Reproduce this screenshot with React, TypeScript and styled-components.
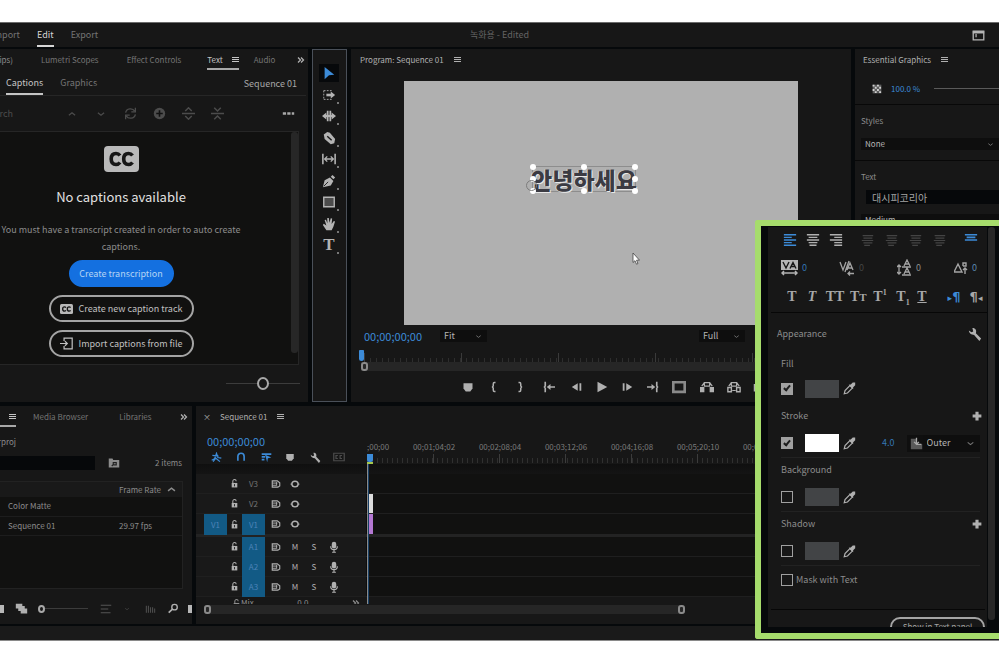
import React from "react";
import styled, { createGlobalStyle, css } from "styled-components";

const C = {
  gap: "#06090b",
  panel: "#171717",
  well: "#111110",
  line: "#262626",
  text: "#8c8c8c",
  dim: "#747474",
  off: "#4c4c4c",
  bright: "#d6d6d6",
  blue: "#3c8bd8",
  patch: "#125a85",
  green: "#a6dc6c",
};

const Global = createGlobalStyle`
  *, *::before, *::after { box-sizing: border-box; }
  body {
    margin: 0;
    background: #fff;
    color: ${C.text};
    font: 8px/12px "Noto Sans CJK KR", "Open Sans", sans-serif;
  }
  button, input, select { font: inherit; color: inherit; }
  button { background: none; border: 0; padding: 0; display: inline-flex; align-items: center; justify-content: center; white-space: nowrap; }
  h2, h3, p { margin: 0; font-weight: 400; font-size: inherit; }
  svg { display: block; flex: none; }
`;

/* ---------- shell ---------- */

const Page = styled.main`
  padding: 22px 1px 0 0;
`;

const Shell = styled.div`
  position: relative;
  background: ${C.gap};
  border-top: 1px solid #6b6b6b;
  border-bottom: 1px solid #8a8a8a;
  overflow: hidden;
`;

const TitleBar = styled.header`
  display: grid;
  grid-template-columns: 1fr auto 1fr;
  align-items: center;
  height: 24px;
  margin-bottom: 2px;
  background: ${C.panel};
`;

const ModeTabs = styled.nav`
  display: flex;
  align-items: stretch;
  height: 24px;
  gap: 17px;
`;

const ClipStart = styled.span<{ $w: number }>`
  display: flex;
  flex: none;
  justify-content: flex-end;
  align-items: center;
  width: ${(p) => p.$w}px;
  overflow: hidden;
  white-space: nowrap;
`;

const ModeTab = styled.button<{ $on?: boolean }>`
  color: ${(p) => (p.$on ? C.bright : C.dim)};
  border-bottom: 2px solid ${(p) => (p.$on ? C.bright : "transparent")};
  border-top: 2px solid transparent;
  font-size: 9px;
`;

const DocTitle = styled.span`
  color: #646464;
  font-size: 9px;
`;

const TitleEnd = styled.div`
  display: flex;
  justify-content: flex-end;
  padding-right: 14px;
  color: #b5b5b5;
`;

const Upper = styled.div`
  display: grid;
  grid-template-columns: 308px 35px 1fr 144px;
  column-gap: 4px;
  height: 353px;
`;

const Lower = styled.div`
  display: grid;
  grid-template-columns: 192px 1fr;
  column-gap: 4px;
  height: 218px;
  margin-top: 4px;
`;

const StatusBar = styled.footer`
  height: 14px;
  margin-top: 2px;
  background: #1a1a1a;
`;

const Panel = styled.section`
  background: ${C.panel};
  min-width: 0;
  overflow: hidden;
  display: flex;
  flex-direction: column;
`;

/* ---------- shared bits ---------- */

const TabRow = styled.div<{ $pad?: number }>`
  display: flex;
  align-items: stretch;
  height: 21px;
  flex: none;
  padding-left: ${(p) => p.$pad ?? 0}px;
  white-space: nowrap;
`;

const Tab = styled.button<{ $on?: boolean; $ml?: number }>`
  gap: 8px;
  margin-left: ${(p) => p.$ml ?? 0}px;
  color: ${(p) => (p.$on ? "#c4c4c4" : C.dim)};
  border-top: 2px solid transparent;
  border-bottom: 2px solid transparent;
  ${(p) => p.$on && css`border-bottom-color: #a8a8a8;`}
`;

const TabTitle = styled.h2`
  display: flex;
  align-items: center;
  gap: 9px;
  color: #b0b0b0;
`;

const Push = styled.span`
  flex: 1;
`;

const Select = styled.label<{ $w?: string; $h?: number }>`
  display: flex;
  flex: none;
  align-items: center;
  position: relative;
  width: ${(p) => p.$w ?? "100%"};
  height: ${(p) => p.$h ?? 12}px;
  background: #0e0e0e;
  select {
    appearance: none;
    width: 100%;
    height: 100%;
    border: 0;
    padding: 0 4px;
    background: transparent;
    color: #b4b4b4;
  }
  svg {
    position: absolute;
    right: 5px;
    color: #777;
    pointer-events: none;
  }
`;

const Range = styled.input<{ $w: string; $thumb: number }>`
  appearance: none;
  width: ${(p) => p.$w};
  height: 14px;
  margin: 0;
  background: linear-gradient(#3c3c3c, #3c3c3c) center / 100% 1px no-repeat;
  &::-webkit-slider-thumb {
    appearance: none;
    width: ${(p) => p.$thumb}px;
    height: ${(p) => p.$thumb + 1}px;
    border: 2px solid #a8a8a8;
    border-radius: 50%;
    background: ${C.panel};
  }
`;

const IconButton = styled.button<{ $w?: number; $c?: string }>`
  width: ${(p) => p.$w ?? 16}px;
  color: ${(p) => p.$c ?? "#b0b0b0"};
`;

/* ---------- icons ---------- */

const GLYPHS: Record<string, React.ReactNode> = {
  menu: <path d="M1 3h14M1 7h14M1 11h14" strokeWidth="2" shapeRendering="crispEdges" />,
  more: <path d="M1 8h4M6.500 8h4M12 8h3" strokeWidth="3" />,
  chevrons: <path d="M2 3l5 5-5 5M8 3l5 5-5 5" strokeWidth="2.500" />,
  up: <path d="M3 10l5-4 5 4" strokeWidth="2" />,
  down: <path d="M3 6l5 4 5-4" strokeWidth="2" />,
  refresh: <path d="M2 7c1-6 9-6 11-2M14 1v5H9M14 9c-1 6-9 6-11 2M2 15v-5h5" strokeWidth="1.6" />,
  plusCircle: (<><circle cx="8" cy="8" r="7" fill="currentColor" stroke="none" /><path d="M8 4v8M4 8h8" stroke="#111" strokeWidth="2" /></>),
  split: <path d="M0 8h16M4 5l4-4 4 4M4 11l4 4 4-4" strokeWidth="1.8" />,
  merge: <path d="M0 8h16M4 1l4 4 4-4M4 15l4-4 4 4" strokeWidth="1.8" />,
  importFile: <path d="M5 5V1.500h10v13H5V11M0 8h9M6 5l3 3-3 3" strokeWidth="1.5" />,
  workspace: (<><path d="M1.500 2.500h13v11h-13z" strokeWidth="1.6" /><path d="M1 4h14" strokeWidth="3" /><path d="M5 6v4" strokeWidth="1.500" /></>),
  arrow: <path d="M3 1l11 9-6 .5L3 15z" fill="currentColor" stroke="none" />,
  trackSelect: (<><path d="M2 3h9M2 13h9M2 3v10" strokeDasharray="2 1.500" /><path d="M5 8h7" strokeWidth="3" /><path d="M10 4l5 4-5 4z" fill="currentColor" stroke="none" /></>),
  ripple: (<><path d="M6.500 2v12M9.500 2v12" strokeWidth="2" /><path d="M0 8l5-4v8zM16 8l-5-4v8z" fill="currentColor" stroke="none" /><path d="M3 8h10" strokeWidth="2.500" /></>),
  razor: (<><path d="M2 4l4-3 3 1 6 7-1 5-4 1-7-6z" fill="currentColor" stroke="none" /><path d="M6 6l5 4.500" stroke="#171717" strokeWidth="1.600" /></>),
  slip: (<><path d="M1 2v12M15 2v12" strokeWidth="1.800" /><path d="M3 8h10M6 5L3 8l3 3M10 5l3 3-3 3" strokeWidth="1.500" /></>),
  pen: (<><path d="M1 15l2-8 6-3 4 4-3 5z" fill="currentColor" stroke="none" /><path d="M10 3l2-2 3 3-2 2z" fill="currentColor" stroke="none" /><path d="M2 14l5-5" stroke="#171717" /></>),
  rect: <path d="M2 2.500h12v11H2z" fill="#4c4c4c" strokeWidth="1.600" />,
  hand: <path d="M5 15L1 9l1-1.200 3 2L3 3.500l1.500-.5 1.700 4L6 1h1.800L8.500 6.500 10 1.500l1.600.3L11 8l2.500-3.500 1.400.6L13 11l-2 4z" fill="currentColor" stroke="none" />,
  marker: <path d="M2 3h12v7l-3 4H5l-3-4z" fill="currentColor" stroke="none" />,
  braceL: <path d="M10 2H8.500Q7 2 7 4v2.500L6 8l1 1.500V12q0 2 1.500 2H10" strokeWidth="2" />,
  braceR: <path d="M6 2h1.500Q9 2 9 4v2.500L10 8 9 9.500V12q0 2-1.500 2H6" strokeWidth="2" />,
  goIn: (<><path d="M4 2H3v4.500L2 8l1 1.500V14h1M16 8H8" strokeWidth="2.200" /><path d="M5 8l5-4v8z" fill="currentColor" stroke="none" /></>),
  goOut: (<><path d="M12 2h1v4.500L14 8l-1 1.500V14h-1M0 8h8" strokeWidth="2.200" /><path d="M11 8L6 4v8z" fill="currentColor" stroke="none" /></>),
  stepBack: (<><path d="M1 8l8-5v10z" fill="currentColor" stroke="none" /><path d="M12.500 3v10" strokeWidth="2.400" /></>),
  stepFwd: (<><path d="M15 8L7 3v10z" fill="currentColor" stroke="none" /><path d="M3.500 3v10" strokeWidth="2.400" /></>),
  play: <path d="M2 1l13 7-13 7z" fill="currentColor" stroke="none" />,
  frame: <path d="M1.500 2.500h13v11h-13z" strokeWidth="3" stroke="#8a8a8a" />,
  lift: (<><path d="M0 8h5v6H0zM11 8h5v6h-5z" fill="currentColor" stroke="none" /><path d="M5 3h6v4H5zM2 7l3-4M14 7l-3-4" strokeWidth="1.400" /></>),
  extract: (<><path d="M1 8.500h4v5H1zM11 8.500h4v5h-4z" strokeWidth="1.600" /><path d="M5 3h6v4H5zM6 12h4M2 7l3-4M14 7l-3-4" strokeWidth="1.400" /></>),
  camera: (<><path d="M1 4h14v10H1zM5 2h6v3H5z" fill="currentColor" stroke="none" /><circle cx="8" cy="9" r="3" stroke="#171717" /></>),
  wrench: <path d="M1 4l3 2 2-1-1-4c4 0 5 3 4 6l6 6-2 3-6-7C4 9 1 7 1 4z" fill="currentColor" stroke="none" />,
  magnet: <path d="M3 14V7a5 5 0 0 1 10 0v7" strokeWidth="2.600" />,
  nest: <path d="M1 12l4-2 3-8 2 6 5 1M3 14l4-5 6 5M2 5l9 1" strokeWidth="1.800" />,
  linked: (<><path d="M1 3h14M1 7h5M1 11h4" strokeWidth="2.400" /><path d="M6 4l9 4-5 1-1 6z" fill="currentColor" stroke="none" /></>),
  ccDim: <path d="M1 3h14v10H1zM6.500 6H4v4h2.500M12 6H9.500v4H12" strokeWidth="1.600" />,
  lock: (<><path d="M3 7h10v8H3z" fill="currentColor" stroke="none" /><path d="M5 7V4a3 3 0 0 1 6 0" strokeWidth="1.800" /><path d="M8 9v4" stroke="#171717" strokeWidth="1.500" /></>),
  sync: (<><path d="M2 3h8l4 3v5l-3 2H2z" strokeWidth="1.800" /><path d="M2 6.500h8M2 10h6M9 5v6" strokeWidth="1.500" /></>),
  eye: (<><ellipse cx="8" cy="8" rx="5" ry="4.500" strokeWidth="2.200" /><path d="M1 8h2M13 8h2" strokeWidth="2" /></>),
  mic: (<><rect x="5" y="1" width="6" height="9" rx="3" fill="currentColor" stroke="none" /><path d="M3.500 7c0 6 9 6 9 0M8 11v4M5.500 15h5" strokeWidth="1.500" /></>),
  plus: <path d="M8 1v14M1 8h14" strokeWidth="5" />,
  search: (<><circle cx="9.500" cy="6" r="4" strokeWidth="2" /><path d="M6.500 9L1 14" strokeWidth="2.500" /></>),
  binSearch: (<><path d="M1 2h5l1 2h8v10H1z" fill="currentColor" stroke="none" /><path d="M5 12l2.500-2.500M7 7.500h4v3H7z" stroke="#222" strokeWidth="1.500" /></>),
  stack: <path d="M1 2h8v3h3v3h3v6H7v-3H4V8H1z" fill="currentColor" stroke="none" />,
  sort: <path d="M1 3h14M1 8h10M1 13h13" strokeWidth="1.600" />,
  bars: <path d="M2 4v10M5 4v10M8 6v8M11 6v8M14 8v6" strokeWidth="1.600" />,
  checker: (<><path d="M1 1h14v14H1z" fill="#5c5c5c" stroke="none" /><path d="M1 1h3v3H1zM8 1h3v3H8zM4.500 4.500h3v3h-3zM11.500 4.500h3v3h-3zM1 8h3v3H1zM8 8h3v3H8zM4.500 11.500h3v3h-3zM11.500 11.500h3v3h-3z" fill="#d0d0d0" stroke="none" /></>),
  dropper: (<><path d="M1.500 14.500l1-4 6-6 3 3-6 6z" strokeWidth="1.500" /><path d="M7 3.500l2.500-.5L12 .5h3V4l-2.500 2.500V9z" fill="currentColor" stroke="none" /></>),
  alignL: <path d="M1 2h14M1 5h9M1 8h14M1 11h9M1 14h14" strokeWidth="1.500" />,
  alignC: <path d="M1 2h14M3 5h10M1 8h14M3 11h10M4 14h8" strokeWidth="1.500" />,
  alignR: <path d="M1 2h14M6 5h9M1 8h14M6 11h9M6 14h9" strokeWidth="1.500" />,
  justify: <path d="M2 2h13M3 5h11M1 8h14M3 11h11M4 14h7" strokeWidth="1.500" />,
  alignTop: <path d="M1 2h14M3 5h10M1 8h14" strokeWidth="1.800" />,
  outer: (<><path d="M1 2h7v7h7v6H1z" fill="#5a5a5a" stroke="none" /><path d="M8 1v8M8 9h6M5 6l3 3 3-3" strokeWidth="1.600" /></>),
};

const Svg = styled.svg`
  fill: none;
  stroke: currentColor;
`;

const Icon = ({ n, s = 12 }: { n: string; s?: number }) => (
  <Svg viewBox="0 0 16 16" width={s} height={s} aria-hidden="true">
    {GLYPHS[n]}
  </Svg>
);

const CcMark = ({ w, h }: { w: number; h: number }) => (
  <svg viewBox="0 0 35 26" width={w} height={h} aria-hidden="true" preserveAspectRatio="none">
    <rect width="35" height="26" rx="4" fill="#b9b9b9" />
    <path d="M16 9.500q-1.500-2-4-2-4.800 0-4.800 5.500t4.800 5.500q2.500 0 4-2M28.500 9.500q-1.500-2-4-2-4.800 0-4.800 5.500t4.800 5.500q2.500 0 4-2" fill="none" stroke="#161616" strokeWidth="3.600" />
  </svg>
);

/* ---------- captions panel ---------- */

const SubTabs = styled.div`
  display: flex;
  align-items: stretch;
  height: 26px;
  padding: 2px 9px 0 6px;
  margin-right: 2px;
  border-bottom: 1px solid ${C.line};
  font-size: 9px;
`;

const SubTab = styled.button<{ $on?: boolean }>`
  margin-right: 17px;
  color: ${(p) => (p.$on ? "#c4c4c4" : C.dim)};
  border-bottom: 2px solid ${(p) => (p.$on ? "#c4c4c4" : "transparent")};
`;

const SeqName = styled.span`
  margin-left: auto;
  align-self: center;
  color: #a8a8a8;
`;

const CaptionTools = styled.div`
  display: flex;
  align-items: center;
  height: 35px;
  color: ${C.off};
  font-size: 9px;
`;

const CaptionIcons = styled.div`
  display: flex;
  gap: 13px;
  margin-left: 51px;
`;

const CaptionBody = styled.div`
  display: grid;
  grid-template-columns: 1fr 7px;
  height: 234px;
  margin-right: 9px;
  border: 1px solid ${C.line};
  border-left: 0;
  background: ${C.well};
`;

const CaptionContent = styled.div`
  display: flex;
  flex-direction: column;
  align-items: center;
  padding: 14px 49px 0 0;
  text-align: center;
  font-size: 9px;
`;

const CaptionHeading = styled.h3`
  margin-top: 16px;
  font-size: 13px;
  line-height: 18px;
  color: #e2e2e2;
`;

const CaptionHint = styled.p`
  width: 242px;
  margin-top: 15px;
  line-height: 17px;
`;

const Scroll = styled.div<{ $h: string }>`
  width: 7px;
  height: ${(p) => p.$h};
  background: #272727;
  border-radius: 3px;
`;

const Pill = styled.button<{ $primary?: boolean }>`
  gap: 6px;
  width: ${(p) => (p.$primary ? 105 : 145)}px;
  height: 27px;
  margin-top: ${(p) => (p.$primary ? 5 : 8)}px;
  border-radius: 14px;
  border: 2px solid ${(p) => (p.$primary ? "#1470e0" : "#a4a4a4")};
  background: ${(p) => (p.$primary ? "#1470e0" : "transparent")};
  color: ${(p) => (p.$primary ? "#b4d4f4" : "#c0c0c0")};
`;

const CaptionFooter = styled.div`
  display: flex;
  flex: 1;
  align-items: center;
  justify-content: flex-end;
  padding-right: 8px;
`;

const CaptionsPanel = () => (
  <Panel aria-label="Text">
    <TabRow>
      <ClipStart $w={13}>Source (no clips)</ClipStart>
      <Tab $ml={28}>Lumetri Scopes</Tab>
      <Tab $ml={28}>Effect Controls</Tab>
      <Tab $ml={26} $on>Text <Icon n="menu" s={8} /></Tab>
      <Tab $ml={15}>Audio</Tab>
      <Push />
      <IconButton $w={14} aria-label="More panels"><Icon n="chevrons" s={8} /></IconButton>
    </TabRow>
    <SubTabs>
      <SubTab $on>Captions</SubTab>
      <SubTab>Graphics</SubTab>
      <SeqName>Sequence 01</SeqName>
    </SubTabs>
    <CaptionTools>
      <ClipStart $w={13}>Search</ClipStart>
      <CaptionIcons>
        {["up", "down", "refresh", "plusCircle", "split", "merge"].map((n) => (
          <IconButton key={n} $c={C.off} aria-label={n}><Icon n={n} s={n === "up" || n === "down" ? 10 : 13} /></IconButton>
        ))}
      </CaptionIcons>
      <Push />
      <IconButton $w={40} $c="#a8a8a8" aria-label="More options"><Icon n="more" s={13} /></IconButton>
    </CaptionTools>
    <CaptionBody>
      <CaptionContent>
        <CcMark w={35} h={26} />
        <CaptionHeading>No captions available</CaptionHeading>
        <CaptionHint>You must have a transcript created in order to auto create captions.</CaptionHint>
        <Pill $primary>Create transcription</Pill>
        <Pill><CcMark w={13} h={10} />Create new caption track</Pill>
        <Pill><Icon n="importFile" s={13} />Import captions from file</Pill>
      </CaptionContent>
      <Scroll $h="221px" />
    </CaptionBody>
    <CaptionFooter>
      <Range type="range" aria-label="Zoom" $w="74px" $thumb={12} defaultValue={50} />
    </CaptionFooter>
  </Panel>
);

/* ---------- tool strip ---------- */

const ToolStrip = styled.nav`
  background: ${C.panel};
  border: 1px solid #4a5059;
  padding: 14px 6px 0;
`;

const ToolList = styled.div`
  display: flex;
  flex-direction: column;
  justify-content: space-between;
  height: 190px;
`;

const Tool = styled.button<{ $on?: boolean }>`
  position: relative;
  width: 20px;
  height: 18px;
  color: ${(p) => (p.$on ? C.blue : "#b4b4b4")};
  background: ${(p) => (p.$on ? "#07090b" : "transparent")};
  font: 700 17px/18px "Liberation Serif", serif;
  &::after {
    content: "";
    display: ${(p) => (p.$on ? "none" : "block")};
    position: absolute;
    right: 0;
    bottom: 0;
    width: 2px;
    height: 2px;
    background: #777;
  }
`;

const TOOLS = ["arrow", "trackSelect", "ripple", "razor", "slip", "pen", "rect", "hand"];

/* ---------- program monitor ---------- */

const Stage = styled.div`
  display: flex;
  justify-content: center;
  height: 244px;
  margin: 11px 53px 0;
  padding-top: 85px;
  background: #b0b0b0;
  position: relative;
`;

const Title = styled.span`
  position: relative;
  height: 26px;
  width: 104px;
  margin-left: -34px;
  border: 1px solid #8d8d8d;
  font-size: 23px;
  line-height: 24px;
  font-weight: 900;
  color: #3b3b43;
  text-shadow: 1px 1px 0 #e8e8e8, -1px 0 0 #d4d4d4;
  display: flex;
  justify-content: center;
  white-space: nowrap;
`;

const Handle = styled.i<{ $x: number; $y: number }>`
  position: absolute;
  left: calc(${(p) => p.$x}% - 3px);
  top: calc(${(p) => p.$y}% - 3px);
  width: 6px;
  height: 6px;
  border-radius: 50%;
  background: #fff;
`;

const Anchor = styled.i`
  position: absolute;
  left: -7px;
  bottom: 0;
  width: 11px;
  height: 11px;
  border: 1px solid #7d7d7d;
  border-radius: 50%;
`;

const Cursor = styled.svg`
  position: absolute;
  left: 228px;
  top: 171px;
`;

const MonitorRow = styled.div`
  display: flex;
  align-items: center;
  height: 22px;
  padding: 0 106px 0 13px;
  font-size: 9px;
`;

const FitGap = styled.span`
  width: 18px;
`;

const Timecode = styled.span`
  font-size: 11px;
  color: ${C.blue};
  white-space: nowrap;
`;

const Ticks = styled.div`
  height: 15px;
  margin-left: 13px;
  background:
    repeating-linear-gradient(90deg, #3a3a3a 0 1px, transparent 1px 97px) 0 100% / 100% 9px no-repeat,
    repeating-linear-gradient(90deg, #2e2e2e 0 1px, transparent 1px 6px) 0 100% / 100% 4px no-repeat;
  position: relative;
`;

const Playhead = styled.i`
  position: absolute;
  left: -5px;
  top: 3px;
  width: 5px;
  height: 11px;
  background: ${C.blue};
  border-radius: 1px 1px 3px 3px;
`;

const ZoomBar = styled.div`
  display: flex;
  align-items: center;
  height: 9px;
  margin-left: 10px;
  background: #262626;
`;

const Knob = styled.i`
  width: 7px;
  height: 9px;
  border: 2px solid #8a8a8a;
  border-radius: 3px;
`;

const Transport = styled.div`
  display: flex;
  align-items: center;
  flex: 1;
  padding-left: 103px;
`;

const TRANSPORT: [string, number][] = [
  ["marker", 28], ["braceL", 24], ["braceR", 28], ["goIn", 30], ["stepBack", 26], ["play", 24],
  ["stepFwd", 26], ["goOut", 25], ["frame", 28], ["lift", 28], ["extract", 26], ["camera", 24],
];

const HANDLES = [[0, 0], [50, 0], [100, 0], [0, 50], [100, 50], [0, 100], [50, 100], [100, 100]];

const ProgramPanel = () => (
  <Panel aria-label="Program">
    <TabRow $pad={9}>
      <TabTitle>Program: Sequence 01 <Icon n="menu" s={8} /></TabTitle>
    </TabRow>
    <Stage>
      <Title>
        안녕하세요
        {HANDLES.map(([x, y]) => <Handle key={`${x}-${y}`} $x={x} $y={y} />)}
        <Anchor />
      </Title>
      <Cursor width="8" height="13" viewBox="0 0 8 13">
        <path d="M1 1v9.500l2-1.800 1.500 3.500 1.500-.7-1.500-3.300h3z" fill="#fff" stroke="#444" strokeWidth=".8" />
      </Cursor>
    </Stage>
    <MonitorRow>
      <Timecode>00;00;00;00</Timecode>
      <FitGap />
      <Select $w="47px">
        <select aria-label="Zoom level"><option>Fit</option></select>
        <Icon n="down" s={7} />
      </Select>
      <Push />
      <Select $w="46px">
        <select aria-label="Playback resolution"><option>Full</option></select>
        <Icon n="down" s={7} />
      </Select>
    </MonitorRow>
    <Ticks><Playhead /></Ticks>
    <ZoomBar><Knob /></ZoomBar>
    <Transport>
      {TRANSPORT.map(([n, w]) => (
        <IconButton key={n} $w={w} aria-label={n}><Icon n={n} s={["frame", "lift", "extract"].includes(n) ? 14 : 12} /></IconButton>
      ))}
    </Transport>
  </Panel>
);

/* ---------- essential graphics ---------- */

const Opacity = styled.div`
  display: flex;
  align-items: center;
  gap: 9px;
  height: 35px;
  padding: 3px 0 0 17px;
  border-bottom: 1px solid #080808;
  color: ${C.blue};
`;

const OpacityTrack = styled.i`
  flex: 1;
  height: 1px;
  margin-left: 5px;
  background: #5a5a5a;
`;

const Group = styled.div`
  padding: 10px 0 10px 6px;
  border-bottom: 1px solid #080808;
`;

const GroupLabel = styled.h3`
  height: 12px;
  margin-bottom: 11px;
`;

const FontInput = styled.input`
  display: block;
  width: 100%;
  height: 14px;
  margin: -4px 0 10px 5px;
  padding: 0 6px;
  border: 0;
  background: #06080a;
  font-size: 10px;
  &, &:focus { color: #a4a4a4; }
`;

const GraphicsPanel = () => (
  <Panel aria-label="Essential Graphics">
    <TabRow $pad={8}>
      <TabTitle>Essential Graphics <Icon n="menu" s={8} /></TabTitle>
    </TabRow>
    <Opacity><Icon n="checker" s={10} />100.0 %<OpacityTrack /></Opacity>
    <Group>
      <GroupLabel>Styles</GroupLabel>
      <Select>
        <select aria-label="Styles"><option>None</option></select>
        <Icon n="down" s={7} />
      </Select>
    </Group>
    <Group>
      <GroupLabel>Text</GroupLabel>
      <FontInput aria-label="Font" defaultValue="대시피코리아" />
      <Select>
        <select aria-label="Font style"><option>Medium</option></select>
      </Select>
    </Group>
  </Panel>
);

/* ---------- project panel ---------- */

const ProjName = styled.div`
  height: 24px;
  padding-top: 9px;
`;

const SearchRow = styled.div`
  display: flex;
  align-items: center;
  height: 24px;
  padding-right: 10px;
`;

const SearchInput = styled.input`
  width: 95px;
  height: 14px;
  margin-right: 13px;
  border: 0;
  background: #06080a;
`;

const BinWell = styled.div`
  height: 108px;
  margin: 6px 9px 0 0;
  background: ${C.well};
  border: 1px solid #222;
  border-left: 0;
`;

const BinTable = styled.table`
  width: 100%;
  border-collapse: collapse;
  table-layout: fixed;
  th, td { padding: 0; font-weight: 400; text-align: left; white-space: nowrap; }
  th { height: 15px; background: #191919; }
  td { height: 19px; border-bottom: 1px solid #1d1d1d; }
  th:first-child { width: 119px; }
  td:first-child { padding-left: 8px; }
`;

const SortHead = styled.span`
  display: flex;
  align-items: center;
  gap: 5px;
`;

const BinFooter = styled.div`
  display: flex;
  flex: 1;
  align-items: center;
  padding-top: 4px;
  color: #b0b0b0;
`;

const Chip = styled.i`
  width: 4px;
  height: 8px;
  background: #b8b8b8;
`;

const ProjectPanel = () => (
  <Panel aria-label="Project">
    <TabRow>
      <Tab $on aria-label="Project menu"><ClipStart $w={16}><Icon n="menu" s={8} /></ClipStart></Tab>
      <Tab $ml={17}>Media Browser</Tab>
      <Tab $ml={31}>Libraries</Tab>
      <Push />
      <IconButton aria-label="More panels"><Icon n="chevrons" s={8} /></IconButton>
    </TabRow>
    <ProjName><ClipStart $w={16}>Untitled.prproj</ClipStart></ProjName>
    <SearchRow>
      <SearchInput aria-label="Filter bin" />
      <Icon n="binSearch" s={12} />
      <Push />
      2 items
    </SearchRow>
    <BinWell>
      <BinTable>
        <thead>
          <tr><th aria-label="Name" /><th><SortHead>Frame Rate <Icon n="up" s={11} /></SortHead></th></tr>
        </thead>
        <tbody>
          <tr><td>Color Matte</td><td /></tr>
          <tr><td>Sequence 01</td><td>29.97 fps</td></tr>
        </tbody>
      </BinTable>
    </BinWell>
    <BinFooter>
      <Chip />
      <IconButton $w={34} aria-label="Icon view"><Icon n="stack" s={13} /></IconButton>
      <Range type="range" aria-label="Icon size" $w="50px" $thumb={7} defaultValue={0} />
      <IconButton $w={36} $c="#555" aria-label="Sort"><Icon n="sort" s={12} /></IconButton>
      <IconButton $w={6} $c="#444" aria-label="Sort options"><Icon n="down" s={6} /></IconButton>
      <IconButton $w={40} $c={C.off} aria-label="Automate"><Icon n="bars" s={11} /></IconButton>
      <IconButton $w={6} aria-label="Find"><Icon n="search" s={11} /></IconButton>
      <Push />
      <Chip />
    </BinFooter>
  </Panel>
);

/* ---------- timeline ---------- */

const TimelineHead = styled.div`
  display: grid;
  grid-template-columns: 171px 1fr;
  height: 37px;
`;

const HeadLeft = styled.div`
  padding: 8px 0 0 11px;
`;

const HeadIcons = styled.div`
  display: flex;
  width: 160px;
  margin-left: -3px;
  padding-top: 2px;
`;

const RulerWrap = styled.div`
  position: relative;
  overflow: hidden;
  padding-top: 14px;
`;

const RulerLabels = styled.div`
  display: flex;
  white-space: nowrap;
  color: #7a7a7a;
  span { width: 66px; flex: none; text-align: center; }
  span:first-child { width: 34px; text-align: left; }
`;

const RulerTicks = styled.div`
  height: 10px;
  background:
    repeating-linear-gradient(90deg, #3c3c3c 0 1px, transparent 1px 66px) 0 100% / 100% 9px no-repeat,
    repeating-linear-gradient(90deg, #303030 0 1px, transparent 1px 5px) 0 100% / 100% 5px no-repeat;
`;

const Tracks = styled.div`
  position: relative;
  height: 140px;
  padding-top: 10px;
  overflow: hidden;
  background: linear-gradient(#0f0f0f, #141414 10px, transparent 10px);
`;

const Track = styled.div<{ $edge?: boolean }>`
  display: grid;
  grid-template-columns: 171px 1fr;
  height: ${(p) => (p.$edge ? 23 : 20)}px;
  border-bottom: ${(p) => (p.$edge ? "3px solid #232323" : "1px solid #1f1f1f")};
`;

const TrackHead = styled.div`
  display: grid;
  grid-template-columns: 23px 15px 23px 21px 18px 20px 20px;
  padding-left: 8px;
  background: #191919;
  border-right: 1px solid #0c0c0c;
  color: #a6a6a6;
  > * { width: auto; }
`;

const Patch = styled.button<{ $on?: boolean }>`
  background: ${(p) => (p.$on ? C.patch : "transparent")};
  color: ${(p) => (p.$on ? "#4d83b8" : C.dim)};
  margin-bottom: -1px;
`;

const MixHead = styled.div`
  display: flex;
  justify-content: space-between;
  width: 168px;
  height: 12px;
  padding: 2px 4px 0 36px;
  line-height: 8px;
`;

const Lane = styled.div`
  background: ${C.well};
  padding-left: 1px;
  display: flex;
`;

const Clip = styled.i<{ $c: string }>`
  width: 5px;
  background: ${(p) => p.$c};
`;

const PlayLine = styled.i`
  position: absolute;
  left: 171px;
  top: 0;
  bottom: 0;
  width: 2px;
  background: linear-gradient(90deg, #8a8a8a 50%, #173f66 50%);
`;

const RulerHead = styled.i`
  position: absolute;
  left: 0;
  bottom: 2px;
  width: 6px;
  height: 8px;
  background: ${C.blue};
  border-radius: 0 0 2px 2px;
`;

const WorkLine = styled.i`
  position: absolute;
  left: 0;
  bottom: 0;
  width: 6px;
  height: 2px;
  background: #a6c84c;
`;

const HScroll = styled.div`
  display: flex;
  align-items: center;
  justify-content: space-between;
  width: 481px;
  height: 9px;
  margin: 1px 0 0 8px;
  background: #262626;
  border-radius: 4px;
`;

type TrackDef = { name: string; source?: boolean; audio?: boolean; on?: boolean; clip?: string; edge?: boolean };

const TRACKS: TrackDef[] = [
  { name: "V3" },
  { name: "V2", clip: "#dcdcdc" },
  { name: "V1", source: true, on: true, clip: "#b478d2", edge: true },
  { name: "A1", audio: true, on: true },
  { name: "A2", audio: true, on: true },
  { name: "A3", audio: true, on: true },
];

const TimelinePanel = () => (
  <Panel aria-label="Timeline">
    <TabRow $pad={7}>
      <TabTitle>×<span>Sequence 01</span><Icon n="menu" s={8} /></TabTitle>
    </TabRow>
    <TimelineHead>
      <HeadLeft>
        <Timecode>00;00;00;00</Timecode>
        <HeadIcons>
          <IconButton $w={24} $c={C.blue} aria-label="Nest"><Icon n="nest" s={11} /></IconButton>
          <IconButton $w={26} $c={C.blue} aria-label="Snap"><Icon n="magnet" s={10} /></IconButton>
          <IconButton $w={24} $c={C.blue} aria-label="Linked selection"><Icon n="linked" s={11} /></IconButton>
          <IconButton $w={24} aria-label="Add marker"><Icon n="marker" s={10} /></IconButton>
          <IconButton $w={26} aria-label="Settings"><Icon n="wrench" s={11} /></IconButton>
          <IconButton $w={22} $c={C.off} aria-label="Caption options"><Icon n="ccDim" s={12} /></IconButton>
        </HeadIcons>
      </HeadLeft>
      <RulerWrap>
        <RulerLabels>
          {[";00;00", "00;01;04;02", "00;02;08;04", "00;03;12;06", "00;04;16;08", "00;05;20;10", "00;06;24;12"].map((t) => (
            <span key={t}>{t}</span>
          ))}
        </RulerLabels>
        <RulerTicks />
        <RulerHead />
        <WorkLine />
      </RulerWrap>
    </TimelineHead>
    <Tracks>
      {TRACKS.map((t) => (
        <Track key={t.name} $edge={t.edge}>
          <TrackHead>
            {t.source ? <Patch $on>V1</Patch> : <span />}
            <IconButton aria-label={`Lock ${t.name}`}><Icon n="lock" s={9} /></IconButton>
            <Patch $on={t.on}>{t.name}</Patch>
            <IconButton aria-label={`Sync lock ${t.name}`}><Icon n="sync" s={10} /></IconButton>
            {t.audio ? (
              <>
                <IconButton aria-label={`Mute ${t.name}`}>M</IconButton>
                <IconButton aria-label={`Solo ${t.name}`}>S</IconButton>
                <IconButton aria-label={`Record ${t.name}`}><Icon n="mic" s={12} /></IconButton>
              </>
            ) : (
              <IconButton aria-label={`Show ${t.name}`}><Icon n="eye" s={10} /></IconButton>
            )}
          </TrackHead>
          <Lane>{t.clip && <Clip $c={t.clip} />}</Lane>
        </Track>
      ))}
      <MixHead><Icon n="lock" s={9} /><span>Mix</span><Push /><span>0.0</span><Push /><Icon n="chevrons" s={8} /></MixHead>
      <PlayLine />
    </Tracks>
    <HScroll><Knob /><Knob /></HScroll>
  </Panel>
);

/* ---------- highlighted inspector ---------- */

const Callout = styled.aside`
  position: absolute;
  right: 0;
  top: 197px;
  width: 244px;
  height: 419px;
  border: solid ${C.green};
  border-width: 6px 0 6px 6px;
  border-radius: 3px 0 0 3px;
  background: ${C.gap};
  padding: 1px 3px 6px 7px;
  display: grid;
  grid-template-columns: 1fr 8px;
  column-gap: 1px;
`;

const Inspector = styled.div`
  background: ${C.panel};
  overflow: hidden;
  font-size: 9px;
`;

const AlignRow = styled.div`
  display: flex;
  align-items: center;
  justify-content: space-between;
  height: 26px;
  padding: 0 9px 0 15px;
`;

const ButtonSet = styled.div<{ $g: number }>`
  display: flex;
  gap: ${(p) => p.$g}px;
`;

const MetricRow = styled.div`
  display: grid;
  grid-template-columns: 58px 58px 57px 1fr;
  align-items: center;
  height: 29px;
  padding-left: 13px;
`;

const Metric = styled.span<{ $c?: string }>`
  display: flex;
  align-items: center;
  gap: 4px;
  color: ${(p) => p.$c ?? "#8c8c8c"};
`;

const FacesRow = styled.div`
  display: flex;
  align-items: center;
  height: 31px;
  margin-left: 3px;
  padding-left: 9px;
  border-bottom: 1px solid #070707;
`;

const Face = styled.button<{ $w?: number; $i?: boolean; $u?: boolean; $c?: string }>`
  display: block;
  width: ${(p) => p.$w ?? 22}px;
  text-align: center;
  font: ${(p) => (p.$i ? "italic" : "normal")} 700 14px/14px "Liberation Serif", serif;
  color: ${(p) => p.$c ?? "#a8a8a8"};
  text-decoration: ${(p) => (p.$u ? "underline" : "none")};
  sup, sub { font-size: 8px; line-height: 0; }
  small { font-size: 11px; }
`;

const Direction = styled(Face)`
  font: 700 13px/14px "DejaVu Sans", sans-serif;
  small { font-size: 9px; }
`;

const SectionHead = styled.div<{ $h: number; $l?: number }>`
  display: flex;
  align-items: center;
  justify-content: space-between;
  height: ${(p) => p.$h}px;
  padding: 0 4px 0 ${(p) => p.$l ?? 13}px;
`;

const PaintRow = styled.div<{ $line?: boolean }>`
  display: flex;
  align-items: center;
  height: ${(p) => (p.$line ? 30 : 31)}px;
  margin: 0 7px 0 13px;
  padding-top: 1px;
  border-bottom: 1px solid ${(p) => (p.$line ? "#222" : "transparent")};
`;

const Check = styled.input`
  appearance: none;
  width: 12px;
  height: 12px;
  margin: 0;
  border: 1px solid #a0a0a0;
  display: grid;
  place-items: center;
  &:checked { background: #a0a0a0; }
  &:checked::before {
    content: "";
    width: 4px;
    height: 7px;
    border: solid #1c1c1c;
    border-width: 0 2px 2px 0;
    transform: rotate(40deg);
    margin-top: -2px;
  }
`;

const Swatch = styled.button<{ $c: string }>`
  width: 34px;
  height: 18px;
  margin: 0 2px 0 12px;
  background: ${(p) => p.$c};
`;

const StrokeWidth = styled.span`
  margin: 0 12px 0 25px;
  color: #3476b4;
`;

const OuterSelect = styled.div`
  display: flex;
  align-items: center;
  flex: 1;
  min-width: 0;
  padding-left: 3px;
  background: #0f0f0f;
  color: #a8a8a8;
`;

const SelectFill = styled.div`
  flex: 1;
  min-width: 0;
`;

const MaskLabel = styled.label`
  display: flex;
  align-items: center;
  gap: 3px;
  height: 44px;
  margin: 0 2px 0 3px;
  padding: 0 0 15px 10px;
  border-bottom: 1px solid #070707;
`;

const CutRow = styled.div`
  display: flex;
  justify-content: flex-end;
  padding: 7px 2px 0 0;
`;

const CutPill = styled(Pill)`
  width: 95px;
  height: 20px;
  margin-top: 0;
  flex: none;
  font-size: 8px;
  color: #a4a4a4;
`;

const Eyedrop = () => <IconButton aria-label="Eyedropper"><Icon n="dropper" s={13} /></IconButton>;

const GRAY = "#424446";

const InspectorCallout = () => (
  <Callout aria-label="Appearance">
    <Inspector>
      <AlignRow>
        <ButtonSet $g={9}>
          <IconButton $w={14} $c={C.blue} aria-label="Left"><Icon n="alignL" s={14} /></IconButton>
          <IconButton $w={14} aria-label="Center"><Icon n="alignC" s={14} /></IconButton>
          <IconButton $w={14} aria-label="Right"><Icon n="alignR" s={14} /></IconButton>
        </ButtonSet>
        <ButtonSet $g={11}>
          {[1, 2, 3, 4].map((k) => (
            <IconButton key={k} $w={13} $c="#444" aria-label={`Justify ${k}`}><Icon n="justify" s={13} /></IconButton>
          ))}
        </ButtonSet>
        <IconButton $w={14} $c={C.blue} aria-label="Top"><Icon n="alignTop" s={14} /></IconButton>
      </AlignRow>
      <MetricRow>
        <Metric $c="#3476b4">
          <svg width="17" height="16" viewBox="0 0 17 16"><path d="M0 0h17v10H0z" fill="#b4b4b4" /><path d="M2 2l3 6 3-6M9 8.500l3-6 3 6M10 6.500h4" fill="none" stroke="#171717" strokeWidth="1.400" /><path d="M1 13h15M3 11l-2 2 2 2M14 11l2 2-2 2" fill="none" stroke="#b4b4b4" strokeWidth="1.500" /></svg>
          0
        </Metric>
        <Metric $c="#444">
          <svg width="16" height="16" viewBox="0 0 16 16"><path d="M1 2l3 8 3-8M10 1L6 12M8 10l3-7 3 7M9 8h4M15 13.500H9M11 11.500l-2 2 2 2" fill="none" stroke="#a4a4a4" strokeWidth="1.300" /></svg>
          0
        </Metric>
        <Metric>
          <svg width="15" height="17" viewBox="0 0 15 17"><path d="M2 6v9M0 8l2-2 2 2M0 13l2 2 2-2M7 7l3-6 3 6M8 5h4M7 15l3-6 3 6M8 13h4M5 8h9M5 16h9" fill="none" stroke="#a4a4a4" strokeWidth="1.300" /></svg>
          0
        </Metric>
        <Metric $c="#5c88b0">
          <svg width="14" height="14" viewBox="0 0 14 14"><path d="M0 11l4-8 4 8zM11 7v6M9 9l2-2 2 2M9 5V2h3v3H9" fill="none" stroke="#a4a4a4" strokeWidth="1.400" /></svg>
          0
        </Metric>
      </MetricRow>
      <FacesRow>
        <Face $w={24} aria-label="Faux bold">T</Face>
        <Face $w={16} $i aria-label="Faux italic">T</Face>
        <Face $w={30} aria-label="All caps">TT</Face>
        <Face $w={16} aria-label="Small caps">T<small>T</small></Face>
        <Face $w={28} aria-label="Superscript">T<sup>1</sup></Face>
        <Face $w={18} aria-label="Subscript">T<sub>1</sub></Face>
        <Face $w={20} $u aria-label="Underline">T</Face>
        <Push />
        <Direction $w={22} $c={C.blue} aria-label="Left to right"><small>▸</small>¶</Direction>
        <Direction $w={22} aria-label="Right to left">¶<small>◂</small></Direction>
      </FacesRow>
      <SectionHead $h={42} $l={9}>Appearance <IconButton aria-label="Settings"><Icon n="wrench" s={14} /></IconButton></SectionHead>
      <SectionHead $h={18}>Fill</SectionHead>
      <PaintRow>
        <Check type="checkbox" defaultChecked aria-label="Fill" />
        <Swatch $c={GRAY} aria-label="Fill color" />
        <Eyedrop />
      </PaintRow>
      <SectionHead $h={24}>Stroke <IconButton $w={12} aria-label="Add stroke"><Icon n="plus" s={10} /></IconButton></SectionHead>
      <PaintRow $line>
        <Check type="checkbox" defaultChecked aria-label="Stroke" />
        <Swatch $c="#ffffff" aria-label="Stroke color" />
        <Eyedrop />
        <StrokeWidth>4.0</StrokeWidth>
        <OuterSelect>
          <Icon n="outer" s={13} />
          <SelectFill>
            <Select $h={17}>
              <select aria-label="Stroke position"><option>Outer</option></select>
              <Icon n="down" s={9} />
            </Select>
          </SelectFill>
        </OuterSelect>
      </PaintRow>
      <SectionHead $h={24}>Background</SectionHead>
      <PaintRow $line>
        <Check type="checkbox" aria-label="Background" />
        <Swatch $c={GRAY} aria-label="Background color" />
        <Eyedrop />
      </PaintRow>
      <SectionHead $h={24}>Shadow <IconButton $w={12} aria-label="Add shadow"><Icon n="plus" s={10} /></IconButton></SectionHead>
      <PaintRow $line>
        <Check type="checkbox" aria-label="Shadow" />
        <Swatch $c={GRAY} aria-label="Shadow color" />
        <Eyedrop />
      </PaintRow>
      <MaskLabel><Check type="checkbox" />Mask with Text</MaskLabel>
      <CutRow><CutPill>Show in Text panel</CutPill></CutRow>
    </Inspector>
    <Scroll $h="393px" />
  </Callout>
);

/* ---------- page ---------- */

export default function App() {
  return (
    <Page>
      <Global />
      <Shell>
        <TitleBar>
          <ModeTabs>
            <ClipStart $w={20}><ModeTab>Import</ModeTab></ClipStart>
            <ModeTab $on>Edit</ModeTab>
            <ModeTab>Export</ModeTab>
          </ModeTabs>
          <DocTitle>녹화용 - Edited</DocTitle>
          <TitleEnd><Icon n="workspace" s={13} /></TitleEnd>
        </TitleBar>
        <Upper>
          <CaptionsPanel />
          <ToolStrip aria-label="Tools">
            <ToolList>
              {TOOLS.map((t, i) => (
                <Tool key={t} $on={i === 0} aria-label={t}><Icon n={t} s={14} /></Tool>
              ))}
              <Tool aria-label="Type">T</Tool>
            </ToolList>
          </ToolStrip>
          <ProgramPanel />
          <GraphicsPanel />
        </Upper>
        <Lower>
          <ProjectPanel />
          <TimelinePanel />
        </Lower>
        <StatusBar />
        <InspectorCallout />
      </Shell>
    </Page>
  );
}
